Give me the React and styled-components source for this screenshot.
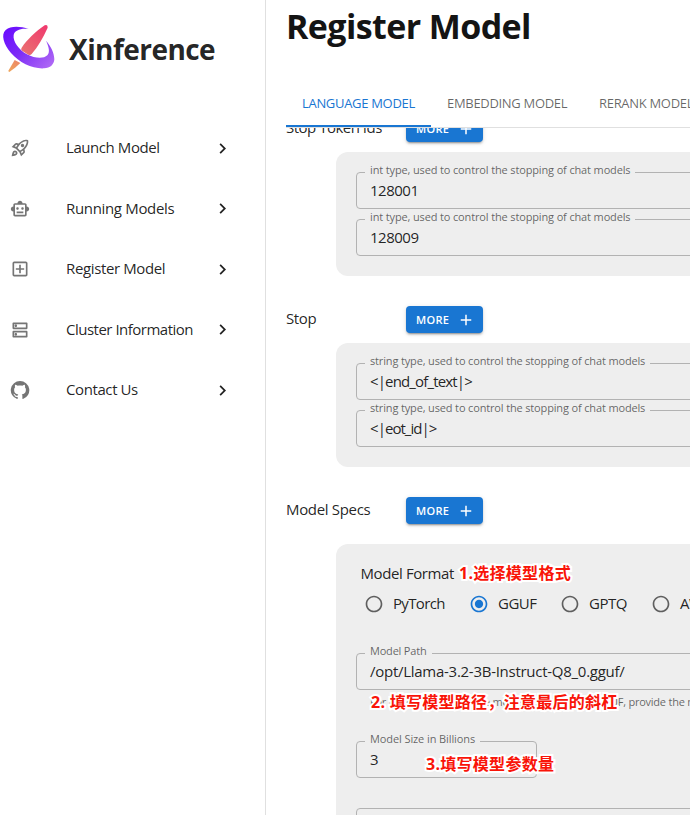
import React from 'react';
import styled, { createGlobalStyle, css } from 'styled-components';
import {
  MdOutlineRocketLaunch,
  MdOutlineSmartToy,
  MdOutlineAddBox,
  MdOutlineDns,
  MdChevronRight,
  MdAdd,
  MdRadioButtonUnchecked,
  MdRadioButtonChecked,
} from 'react-icons/md';

const GlobalStyle = createGlobalStyle`
  *, *::before, *::after { box-sizing: border-box; }
  body {
    margin: 0;
    background: #fff;
    color: rgba(0, 0, 0, 0.87);
    font-family: "Open Sans", "Noto Sans CJK SC", sans-serif;
    font-size: 15px;
    overflow: hidden;
  }
`;

const Page = styled.div`
  display: flex;
  width: 690px;
  height: 815px;
  overflow: hidden;
`;

const Sidebar = styled.aside`
  flex: none;
  width: 266px;
  border-right: 1px solid #e0e0e0;
`;

const Brand = styled.div`
  display: flex;
  align-items: center;
  height: 118px;
  padding-bottom: 24px;
`;

const BrandName = styled.span`
  margin: 4px 0 0 5px;
  font-size: 28px;
  font-weight: 700;
  line-height: 40px;
  letter-spacing: -0.55px;
`;

const Nav = styled.nav`
  display: flex;
  flex-direction: column;
`;

const NavItem = styled.a`
  display: flex;
  align-items: center;
  height: 60.5px;
  padding-left: 10px;
  color: rgba(0, 0, 0, 0.87);
`;

const NavIcon = styled.span`
  display: flex;
  width: 56px;
  color: #757575;
`;

const Text = styled.span`
  display: inline-block;
  padding-bottom: 2px;
  font-weight: 400;
  letter-spacing: ${(p) => p.$track || 0}px;
  white-space: nowrap;
`;

const NavLabel = styled(Text)`
  width: 146px;
  line-height: 22px;
`;

const Main = styled.main`
  flex: 1;
  min-width: 0;
  display: flex;
  flex-direction: column;
  padding-left: 20px;
`;

const Title = styled.h1`
  margin: 0;
  height: 79px;
  padding-top: 2px;
  font-size: 34px;
  font-weight: 700;
  line-height: 48px;
  letter-spacing: -0.6px;
  color: #141414;
`;

const Tabs = styled.div`
  flex: none;
  display: flex;
  height: 49px;
  border-bottom: 1px solid #e0e0e0;
`;

const Tab = styled.div`
  flex: none;
  display: flex;
  align-items: center;
  width: ${(p) => p.$width}px;
  height: 48px;
  padding: 2px 16px 0;
  font-size: 13px;
  font-weight: 400;
  letter-spacing: -0.31px;
  white-space: nowrap;
  border-bottom: 2px solid transparent;
  color: rgba(0, 0, 0, 0.6);
  ${(p) =>
    p.$active &&
    css`
      color: #1976d2;
      border-bottom-color: #1976d2;
    `}
`;

const Scroll = styled.div`
  flex: 1;
  min-height: 0;
  overflow: hidden;
`;

const Form = styled.div`
  display: flex;
  flex-direction: column;
  gap: 30px;
  margin-top: -13px;
`;

const Section = styled.section`
  display: flex;
  flex-direction: column;
  gap: ${(p) => p.$gap || 10}px;
`;

const SectionHead = styled.div`
  display: flex;
  align-items: center;
  height: 27px;
`;

const SectionLabel = styled(Text)`
  width: 120px;
  padding-bottom: 3px;
`;

const MoreButton = styled.button`
  display: flex;
  align-items: center;
  justify-content: space-between;
  width: 77px;
  height: 27px;
  padding: 0 8px 0 10px;
  border: 0;
  border-radius: 4px;
  background: #1976d2;
  color: #fff;
  font: 600 11px "Open Sans", sans-serif;
  letter-spacing: 0.35px;
  box-shadow: 0 3px 1px -2px rgba(0, 0, 0, 0.2), 0 2px 2px rgba(0, 0, 0, 0.14),
    0 1px 5px rgba(0, 0, 0, 0.12);
`;

const Panel = styled.div`
  display: flex;
  flex-direction: column;
  gap: 10px;
  margin-left: 50px;
  padding: 20px 0 20px 20px;
  border-radius: 12px 0 0 12px;
  background: #eee;
`;

const SpecsPanel = styled(Panel)`
  gap: 0;
  height: 320px;
`;

const Field = styled.div`
  position: relative;
  flex: none;
  display: flex;
  align-items: center;
  width: ${(p) => (p.$width ? `${p.$width}px` : '400px')};
  height: 37px;
  padding-left: 13px;
  border: 1px solid #b2b2b2;
  border-radius: 4px;
`;

const FieldLabel = styled.label`
  position: absolute;
  top: -11px;
  left: 8px;
  width: ${(p) => p.$width}px;
  padding-left: 5px;
  background: #eee;
  color: rgba(0, 0, 0, 0.6);
  font-size: 11px;
  line-height: 16px;
  letter-spacing: ${(p) => p.$track}px;
  white-space: nowrap;
`;

const FormatTitle = styled.div`
  display: flex;
  height: 20px;
  line-height: 18px;
  padding-left: 4.5px;
`;

const RadioRow = styled.div`
  flex: none;
  display: flex;
  align-items: center;
  height: 40px;
  padding-left: 8px;
`;

const Radio = styled.label`
  flex: none;
  display: flex;
  align-items: center;
  gap: 9px;
  width: ${(p) => p.$width}px;

  svg {
    flex: none;
    color: ${(p) => (p.$checked ? '#1976d2' : 'rgba(0, 0, 0, 0.6)')};
  }
`;

const Helper = styled.div`
  height: 51px;
  padding: 4px 0 0 14px;
  color: rgba(0, 0, 0, 0.6);
  font-size: 11px;
  line-height: 16px;
  letter-spacing: -0.23px;
  white-space: nowrap;
`;

const Anchor = styled.div`
  position: relative;
  flex: none;
`;

/* Red callout floating over the form */
const Note = styled.span`
  position: absolute;
  left: ${(p) => p.$x}px;
  top: ${(p) => p.$y}px;
  z-index: 2;
  color: #f91408;
  font-family: "Open Sans", "Noto Sans CJK SC", sans-serif;
  font-size: 16px;
  font-weight: 700;
  line-height: 22px;
  letter-spacing: 0.28px;
  white-space: pre;
  -webkit-text-stroke: 4px #fff;
  paint-order: stroke fill;
`;

const Spacer = styled.div`
  flex: none;
  height: ${(p) => p.$h}px;
`;

const Logo = () => (
  <svg width="64" height="64" viewBox="0 0 192 192">
    <defs>
      <linearGradient id="ring" x1="0" y1="0.1" x2="1" y2="0.9">
        <stop offset="0" stopColor="#6a0cff" />
        <stop offset="0.45" stopColor="#7c2cf6" />
        <stop offset="1" stopColor="#b06af5" />
      </linearGradient>
      <linearGradient id="rocket" gradientUnits="userSpaceOnUse" x1="140" y1="30" x2="28" y2="170">
        <stop offset="0" stopColor="#f0386e" />
        <stop offset="0.55" stopColor="#ea6b70" />
        <stop offset="1" stopColor="#efa65c" />
      </linearGradient>
    </defs>
    <path
      fill="url(#ring)"
      d="M86 42C62 34 32 32 17 45C2 59 11 88 33 114C58 143 98 162 132 160C151 159 162 149 163 133C163 114 152 92 138 77C146 94 151 111 142 121C131 132 105 131 81 118C56 104 38 79 41 60C44 46 62 39 86 42Z"
    />
    <path
      fill="url(#rocket)"
      d="M134 31Q144 27 143 38C130 67 113 96 95 117Q91 122 85 119L66 107Q61 103 65 98C82 74 106 50 134 31Z"
    />
    <path fill="url(#rocket)" d="M44 135L61 144C51 154 40 163 28 171Q24 171 26 166Z" />
  </svg>
);

const GitHubIcon = ({ size }) => (
  <svg width={size} height={size} viewBox="0 0 24 24" fill="currentColor">
    <path d="M12 1.27a11 11 0 00-3.48 21.46c.55.09.73-.28.73-.55v-1.84c-3.03.64-3.67-1.46-3.67-1.46-.55-1.29-1.28-1.65-1.28-1.65-.92-.65.1-.65.1-.65 1.1 0 1.73 1.1 1.73 1.1.92 1.65 2.57 1.2 3.21.92a2 2 0 01.64-1.47c-2.47-.27-5.04-1.19-5.04-5.5 0-1.1.46-2.1 1.2-2.84a3.76 3.76 0 010-2.93s.91-.28 3.11 1.1c1.8-.49 3.7-.49 5.5 0 2.1-1.38 3.02-1.1 3.02-1.1a3.76 3.76 0 01.1 2.93c.83.74 1.2 1.74 1.2 2.94 0 4.21-2.57 5.13-5.04 5.4.45.37.82.92.82 2.02v3.03c0 .27.1.64.73.55A11 11 0 0012 1.27" />
  </svg>
);

const navItems = [
  { label: 'Launch Model', Icon: MdOutlineRocketLaunch, track: -0.43 },
  { label: 'Running Models', Icon: MdOutlineSmartToy, track: -0.33 },
  { label: 'Register Model', Icon: MdOutlineAddBox, track: -0.37 },
  { label: 'Cluster Information', Icon: MdOutlineDns, track: -0.5 },
  { label: 'Contact Us', Icon: GitHubIcon, track: -0.4 },
];

const More = () => (
  <MoreButton>
    MORE
    <MdAdd size={18} />
  </MoreButton>
);

const Outlined = ({ label, labelWidth, labelTrack, value, track, width }) => (
  <Field $width={width}>
    {label && (
      <FieldLabel $width={labelWidth} $track={labelTrack}>
        {label}
      </FieldLabel>
    )}
    <Text $track={track}>{value}</Text>
  </Field>
);

const intLabel = 'int type, used to control the stopping of chat models';
const stringLabel = 'string type, used to control the stopping of chat models';

export default function App() {
  return (
    <Page>
      <GlobalStyle />
      <Sidebar>
        <Brand>
          <Logo />
          <BrandName>Xinference</BrandName>
        </Brand>
        <Nav>
          {navItems.map(({ label, Icon, track }) => (
            <NavItem key={label}>
              <NavIcon>
                <Icon size={20} />
              </NavIcon>
              <NavLabel $track={track}>{label}</NavLabel>
              <MdChevronRight size={21} />
            </NavItem>
          ))}
        </Nav>
      </Sidebar>
      <Main>
        <Title>Register Model</Title>
        <Tabs>
          <Tab $active $width={145}>LANGUAGE MODEL</Tab>
          <Tab $width={152}>EMBEDDING MODEL</Tab>
          <Tab $width={130}>RERANK MODEL</Tab>
        </Tabs>
        <Scroll>
          <Form>
            <Section>
              <SectionHead>
                <SectionLabel $track={-0.5}>Stop Token Ids</SectionLabel>
                <More />
              </SectionHead>
              <Panel>
                <Outlined label={intLabel} labelWidth={270} labelTrack={-0.14} value="128001" track={-0.5} />
                <Outlined label={intLabel} labelWidth={270} labelTrack={-0.14} value="128009" track={-0.5} />
              </Panel>
            </Section>
            <Section>
              <SectionHead>
                <SectionLabel $track={-0.4}>Stop</SectionLabel>
                <More />
              </SectionHead>
              <Panel>
                <Outlined label={stringLabel} labelWidth={285} labelTrack={-0.15} value="<|end_of_text|>" track={-0.85} />
                <Outlined label={stringLabel} labelWidth={285} labelTrack={-0.15} value="<|eot_id|>" track={-0.95} />
              </Panel>
            </Section>
            <Section $gap={20}>
              <SectionHead>
                <SectionLabel $track={-0.33}>Model Specs</SectionLabel>
                <More />
              </SectionHead>
              <SpecsPanel>
                <Anchor>
                  <FormatTitle>
                    <Text $track={-0.4}>Model Format</Text>
                  </FormatTitle>
                  <Note $x={103} $y={-2}>1.选择模型格式</Note>
                </Anchor>
                <RadioRow>
                  <Radio $width={105}>
                    <MdRadioButtonUnchecked size={20} />
                    <Text $track={-0.65}>PyTorch</Text>
                  </Radio>
                  <Radio $checked $width={91}>
                    <MdRadioButtonChecked size={20} />
                    <Text $track={-0.5}>GGUF</Text>
                  </Radio>
                  <Radio $width={91}>
                    <MdRadioButtonUnchecked size={20} />
                    <Text $track={-0.5}>GPTQ</Text>
                  </Radio>
                  <Radio $width={91}>
                    <MdRadioButtonUnchecked size={20} />
                    <Text $track={-0.4}>AWQ</Text>
                  </Radio>
                </RadioRow>
                <Spacer $h={29} />
                <Outlined
                  label="Model Path"
                  labelWidth={67}
                  labelTrack={-0.2}
                  value="/opt/Llama-3.2-3B-Instruct-Q8_0.gguf/"
                  track={-0.27}
                />
                <Anchor>
                  <Helper>For PyTorch, provide the model directory. For GGUF, provide the model file path.</Helper>
                  <Note $x={15} $y={1}>2. 填写模型路径，注意最后的斜杠</Note>
                </Anchor>
                <Anchor>
                  <Outlined label="Model Size in Billions" labelWidth={115} labelTrack={-0.1} value="3" track={0} width={181} />
                  <Note $x={70} $y={12}>3.填写模型参数量</Note>
                </Anchor>
                <Spacer $h={30} />
                <Outlined value="" />
              </SpecsPanel>
            </Section>
          </Form>
        </Scroll>
      </Main>
    </Page>
  );
}
